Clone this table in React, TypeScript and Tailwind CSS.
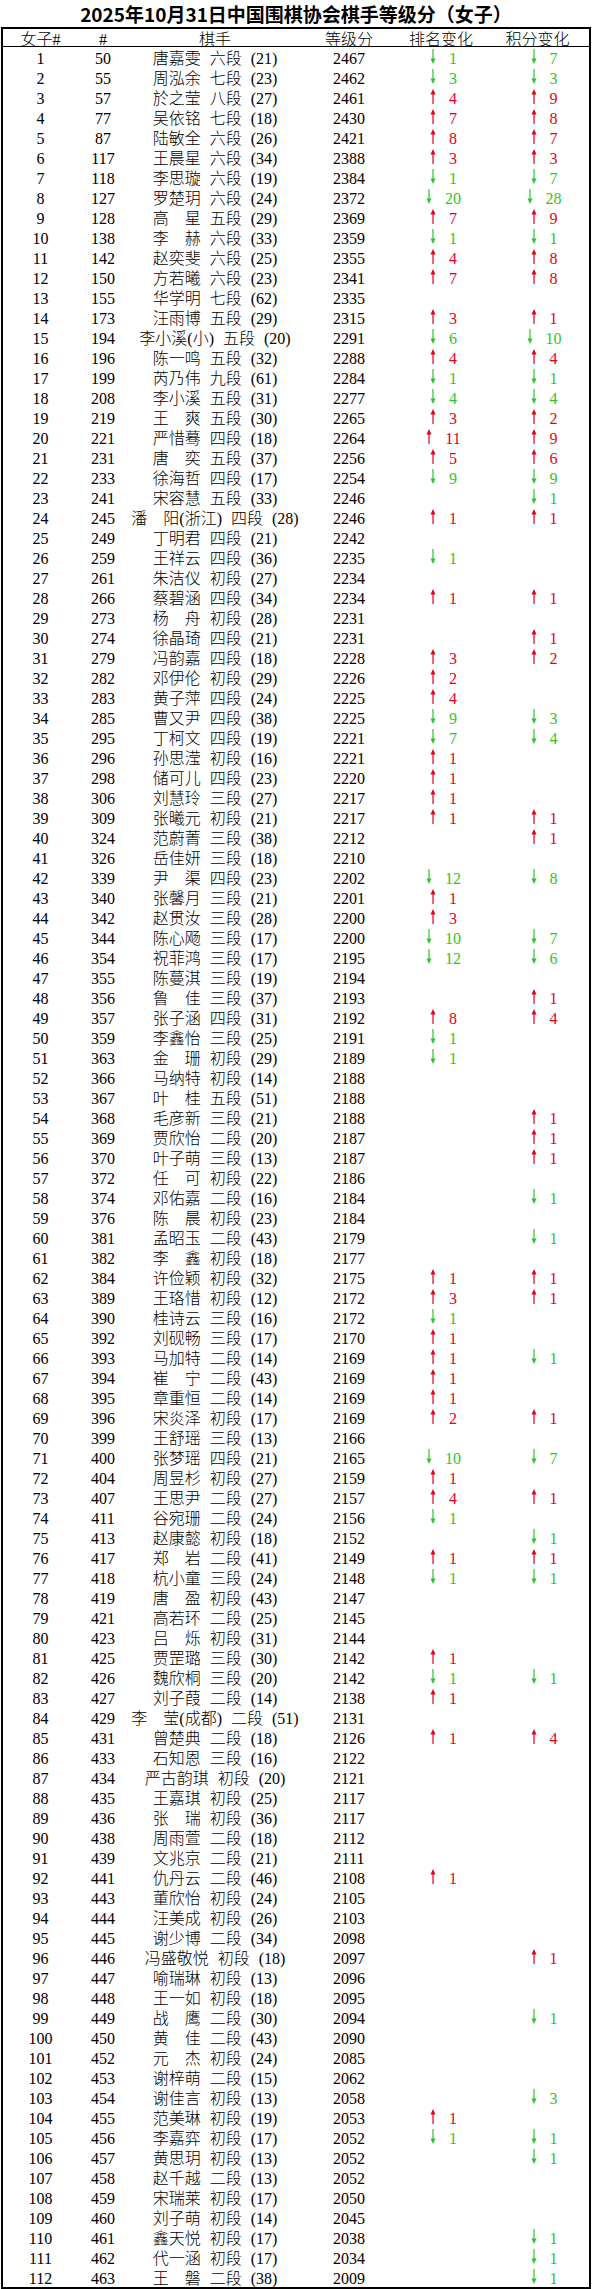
import React from "react";

// [女子#, #, 姓名, 段位, 年龄, 等级分, 排名变化, 积分变化]  变化: 正数上升, 负数下降, 0 为空
type Row = [number, number, string, string, number, number, number, number];

const rows: Row[] = [
  [1, 50, "唐嘉雯", "六段", 21, 2467, -1, -7],
  [2, 55, "周泓余", "七段", 23, 2462, -3, -3],
  [3, 57, "於之莹", "八段", 27, 2461, 4, 9],
  [4, 77, "吴依铭", "七段", 18, 2430, 7, 8],
  [5, 87, "陆敏全", "六段", 26, 2421, 8, 7],
  [6, 117, "王晨星", "六段", 34, 2388, 3, 3],
  [7, 118, "李思璇", "六段", 19, 2384, -1, -7],
  [8, 127, "罗楚玥", "六段", 24, 2372, -20, -28],
  [9, 128, "高　星", "五段", 29, 2369, 7, 9],
  [10, 138, "李　赫", "六段", 33, 2359, -1, -1],
  [11, 142, "赵奕斐", "六段", 25, 2355, 4, 8],
  [12, 150, "方若曦", "六段", 23, 2341, 7, 8],
  [13, 155, "华学明", "七段", 62, 2335, 0, 0],
  [14, 173, "汪雨博", "五段", 29, 2315, 3, 1],
  [15, 194, "李小溪(小)", "五段", 20, 2291, -6, -10],
  [16, 196, "陈一鸣", "五段", 32, 2288, 4, 4],
  [17, 199, "芮乃伟", "九段", 61, 2284, -1, -1],
  [18, 208, "李小溪", "五段", 31, 2277, -4, -4],
  [19, 219, "王　爽", "五段", 30, 2265, 3, 2],
  [20, 221, "严惜蓦", "四段", 18, 2264, 11, 9],
  [21, 231, "唐　奕", "五段", 37, 2256, 5, 6],
  [22, 233, "徐海哲", "四段", 17, 2254, -9, -9],
  [23, 241, "宋容慧", "五段", 33, 2246, 0, -1],
  [24, 245, "潘　阳(浙江)", "四段", 28, 2246, 1, 1],
  [25, 249, "丁明君", "四段", 21, 2242, 0, 0],
  [26, 259, "王祥云", "四段", 36, 2235, -1, 0],
  [27, 261, "朱洁仪", "初段", 27, 2234, 0, 0],
  [28, 266, "蔡碧涵", "四段", 34, 2234, 1, 1],
  [29, 273, "杨　舟", "初段", 28, 2231, 0, 0],
  [30, 274, "徐晶琦", "四段", 21, 2231, 0, 1],
  [31, 279, "冯韵嘉", "四段", 18, 2228, 3, 2],
  [32, 282, "邓伊伦", "初段", 29, 2226, 2, 0],
  [33, 283, "黄子萍", "四段", 24, 2225, 4, 0],
  [34, 285, "曹又尹", "四段", 38, 2225, -9, -3],
  [35, 295, "丁柯文", "四段", 19, 2221, -7, -4],
  [36, 296, "孙思滢", "初段", 16, 2221, 1, 0],
  [37, 298, "储可儿", "四段", 23, 2220, 1, 0],
  [38, 306, "刘慧玲", "三段", 27, 2217, 1, 0],
  [39, 309, "张曦元", "初段", 21, 2217, 1, 1],
  [40, 324, "范蔚菁", "三段", 38, 2212, 0, 1],
  [41, 326, "岳佳妍", "三段", 18, 2210, 0, 0],
  [42, 339, "尹　渠", "四段", 23, 2202, -12, -8],
  [43, 340, "张馨月", "三段", 21, 2201, 1, 0],
  [44, 342, "赵贯汝", "三段", 28, 2200, 3, 0],
  [45, 344, "陈心飏", "三段", 17, 2200, -10, -7],
  [46, 354, "祝菲鸿", "三段", 17, 2195, -12, -6],
  [47, 355, "陈蔓淇", "三段", 19, 2194, 0, 0],
  [48, 356, "鲁　佳", "三段", 37, 2193, 0, 1],
  [49, 357, "张子涵", "四段", 31, 2192, 8, 4],
  [50, 359, "李鑫怡", "三段", 25, 2191, -1, 0],
  [51, 363, "金　珊", "初段", 29, 2189, -1, 0],
  [52, 366, "马纳特", "初段", 14, 2188, 0, 0],
  [53, 367, "叶　桂", "五段", 51, 2188, 0, 0],
  [54, 368, "毛彦新", "三段", 21, 2188, 0, 1],
  [55, 369, "贾欣怡", "二段", 20, 2187, 0, 1],
  [56, 370, "叶子萌", "三段", 13, 2187, 0, 1],
  [57, 372, "任　可", "初段", 22, 2186, 0, 0],
  [58, 374, "邓佑嘉", "二段", 16, 2184, 0, -1],
  [59, 376, "陈　晨", "初段", 23, 2184, 0, 0],
  [60, 381, "孟昭玉", "二段", 43, 2179, 0, -1],
  [61, 382, "李　鑫", "初段", 18, 2177, 0, 0],
  [62, 384, "许俭颖", "初段", 32, 2175, 1, 1],
  [63, 389, "王珞惜", "初段", 12, 2172, 3, 1],
  [64, 390, "桂诗云", "三段", 16, 2172, -1, 0],
  [65, 392, "刘砚畅", "三段", 17, 2170, 1, 0],
  [66, 393, "马加特", "二段", 14, 2169, 1, -1],
  [67, 394, "崔　宁", "二段", 43, 2169, 1, 0],
  [68, 395, "章重恒", "二段", 14, 2169, 1, 0],
  [69, 396, "宋炎泽", "初段", 17, 2169, 2, 1],
  [70, 399, "王舒瑶", "三段", 13, 2166, 0, 0],
  [71, 400, "张梦瑶", "四段", 21, 2165, -10, -7],
  [72, 404, "周昱杉", "初段", 27, 2159, 1, 0],
  [73, 407, "王思尹", "二段", 27, 2157, 4, 1],
  [74, 411, "谷宛珊", "二段", 24, 2156, -1, 0],
  [75, 413, "赵康懿", "初段", 18, 2152, 0, -1],
  [76, 417, "郑　岩", "二段", 41, 2149, 1, 1],
  [77, 418, "杭小童", "三段", 24, 2148, -1, -1],
  [78, 419, "唐　盈", "初段", 43, 2147, 0, 0],
  [79, 421, "高若环", "二段", 25, 2145, 0, 0],
  [80, 423, "吕　烁", "初段", 31, 2144, 0, 0],
  [81, 425, "贾罡璐", "三段", 30, 2142, 1, 0],
  [82, 426, "魏欣桐", "三段", 20, 2142, -1, -1],
  [83, 427, "刘子葭", "二段", 14, 2138, 1, 0],
  [84, 429, "李　莹(成都)", "二段", 51, 2131, 0, 0],
  [85, 431, "曾楚典", "二段", 18, 2126, 1, 4],
  [86, 433, "石知恩", "三段", 16, 2122, 0, 0],
  [87, 434, "严古韵琪", "初段", 20, 2121, 0, 0],
  [88, 435, "王嘉琪", "初段", 25, 2117, 0, 0],
  [89, 436, "张　瑞", "初段", 36, 2117, 0, 0],
  [90, 438, "周雨萱", "二段", 18, 2112, 0, 0],
  [91, 439, "文兆京", "二段", 21, 2111, 0, 0],
  [92, 441, "仇丹云", "二段", 46, 2108, 1, 0],
  [93, 443, "董欣怡", "初段", 24, 2105, 0, 0],
  [94, 444, "汪美成", "初段", 26, 2103, 0, 0],
  [95, 445, "谢少博", "二段", 34, 2098, 0, 0],
  [96, 446, "冯盛敬悦", "初段", 18, 2097, 0, 1],
  [97, 447, "喻瑞琳", "初段", 13, 2096, 0, 0],
  [98, 448, "王一如", "初段", 18, 2095, 0, 0],
  [99, 449, "战　鹰", "二段", 30, 2094, 0, -1],
  [100, 450, "黄　佳", "二段", 43, 2090, 0, 0],
  [101, 452, "元　杰", "初段", 24, 2085, 0, 0],
  [102, 453, "谢梓萌", "二段", 15, 2062, 0, 0],
  [103, 454, "谢佳言", "初段", 13, 2058, 0, -3],
  [104, 455, "范美琳", "初段", 19, 2053, 1, 0],
  [105, 456, "李嘉弈", "初段", 17, 2052, -1, -1],
  [106, 457, "黄思玥", "初段", 13, 2052, 0, -1],
  [107, 458, "赵千越", "二段", 13, 2052, 0, 0],
  [108, 459, "宋瑞莱", "初段", 17, 2050, 0, 0],
  [109, 460, "刘子萌", "初段", 14, 2045, 0, 0],
  [110, 461, "鑫天悦", "初段", 17, 2038, 0, -1],
  [111, 462, "代一涵", "初段", 17, 2034, 0, -1],
  [112, 463, "王　磐", "二段", 38, 2009, 0, -1],
];

const cols = "grid grid-cols-[75px_50px_174px_94px_90px_1fr]";

function Arrow({ up }: { up: boolean }) {
  return (
    <svg width="8" height="15" viewBox="0 0 8 15" className="mt-[2px] shrink-0">
      {up ? (
        <>
          <path d="M4 4v11" stroke="currentColor" strokeWidth="1.2" />
          <path d="M4 0 1.5 5.5h5z" fill="currentColor" />
        </>
      ) : (
        <>
          <path d="M4 0v11" stroke="currentColor" strokeWidth="1.2" />
          <path d="M4 15 1.5 9.5h5z" fill="currentColor" />
        </>
      )}
    </svg>
  );
}

function Change({ v, pad }: { v: number; pad: string }) {
  if (!v) return <div />;
  const color = v > 0 ? "text-[#e3001b]" : "text-[#2ec42e]";
  return (
    <div className={`flex items-start justify-center gap-[12px] ${pad} ${color}`}>
      <Arrow up={v > 0} />
      <span>{Math.abs(v)}</span>
    </div>
  );
}

export default function App() {
  return (
    <div className="w-[592px] bg-white text-black">
      <h1 className="h-[27px] text-center font-['Noto_Sans_CJK_SC',sans-serif] text-[19px] font-bold leading-[27px]">
        2025年10月31日中国围棋协会棋手等级分（女子）
      </h1>

      <div className="mx-px border-2 border-black font-['Liberation_Serif','Noto_Sans_CJK_SC',serif] text-[16px] font-light">
        <div className={`${cols} h-[18px] border-b border-black text-center leading-[22px]`}>
          <div>女子#</div>
          <div>#</div>
          <div>棋手</div>
          <div>等级分</div>
          <div>排名变化</div>
          <div>积分变化</div>
        </div>

        {rows.map(([n, all, name, dan, age, score, rank, pts]) => (
          <div key={n} className={`${cols} h-5 text-center leading-[24px]`}>
            <div>{n}</div>
            <div>{all}</div>
            <div className="flex justify-center gap-[9px] whitespace-nowrap">
              <span>{name}</span>
              <span>{dan}</span>
              <span>({age})</span>
            </div>
            <div>{score}</div>
            <Change v={rank} pad="pl-[4px]" />
            <Change v={pts} pad="pl-[12px]" />
          </div>
        ))}
      </div>
    </div>
  );
}
